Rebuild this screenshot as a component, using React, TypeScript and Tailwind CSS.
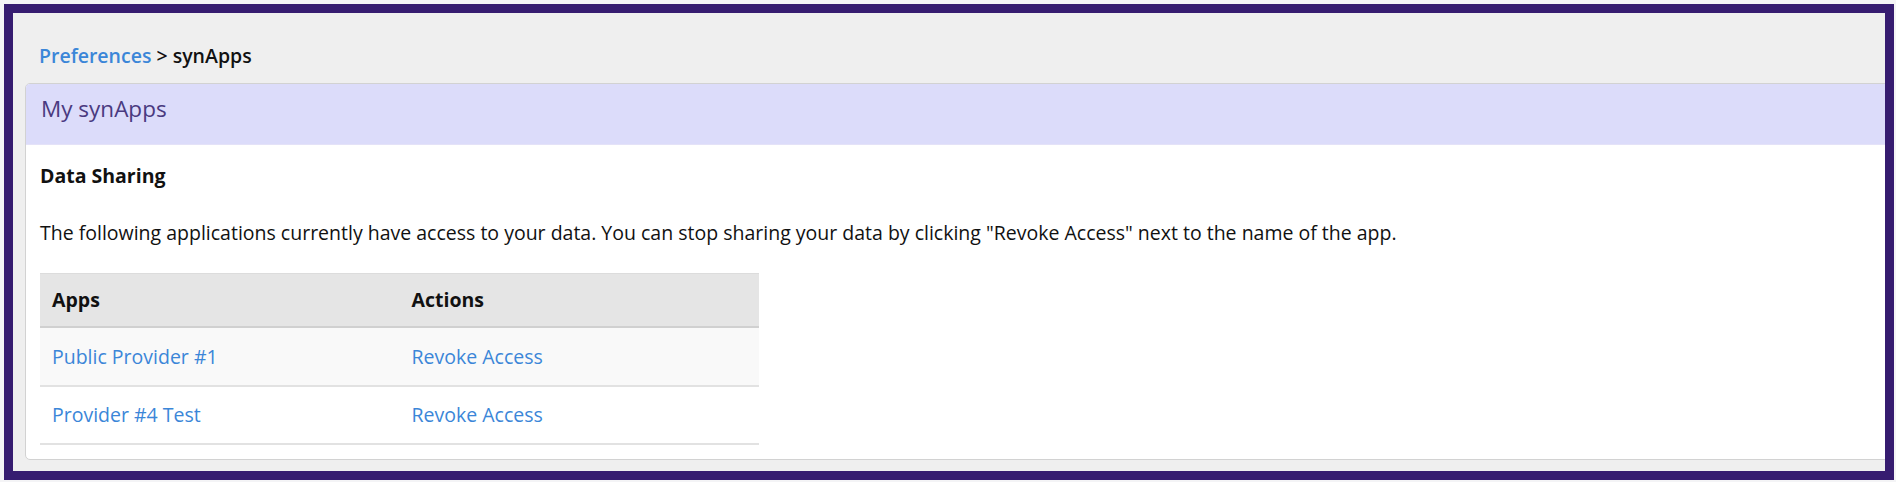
import React from "react";

export default function App() {
  const rows = ["Public Provider #1", "Provider #4 Test"];
  return (
    <div className="w-[1896px] h-[482px] bg-[#f4f4f6] pt-[4px] pl-[4px]" style={{ fontFamily: '"Open Sans", sans-serif' }}>
      <div className="w-[1890px] h-[476px] border-[9px] border-[#361c70] bg-[#efefef] overflow-hidden">
        <div className="pl-[12px] pt-[29px]">
          <div className="pl-[14px] h-[27px] leading-[27px] text-[19.5px] font-semibold text-[#111]">
            <span className="text-[#3b86d8]">Preferences</span> &gt; synApps
          </div>
          <div className="mt-[14px] mr-[-20px] border border-[#d2d2d2] rounded-[5px] bg-white overflow-hidden">
            <div className="h-[61px] bg-[#dcdcfa] pl-[15px] pt-[10px] border-b border-[#e4e2f8]">
              <div className="text-[22.5px] leading-[30px] text-[#4a3a80]">My synApps</div>
            </div>
            <div className="pl-[14px] pt-[17px] pb-[14px] text-[19.5px] text-[#111]">
              <div className="h-[27px] leading-[27px] font-bold">Data Sharing</div>
              <p className="mt-[30px] h-[27px] leading-[27px]">
                The following applications currently have access to your data. You can stop sharing your data by clicking "Revoke Access" next to the name of the app.
              </p>
              <div className="mt-[27px] w-[719px] border-t border-[#dcdcdc]">
                <div className="grid grid-cols-2 h-[54px] bg-[#e5e5e5] border-b-2 border-[#d0d0d0] items-center font-bold">
                  <div className="pl-[12px]">Apps</div>
                  <div className="pl-[12px]">Actions</div>
                </div>
                {rows.map((r, i) => (
                  <div
                    key={r}
                    className={
                      i === 0
                        ? "grid grid-cols-2 h-[59px] bg-[#f9f9f9] border-b-2 border-[#e2e2e2] items-center text-[#3b86d8]"
                        : "grid grid-cols-2 h-[58px] bg-white border-b-2 border-[#e2e2e2] items-center text-[#3b86d8]"
                    }
                  >
                    <div className="pl-[12px]">{r}</div>
                    <div className="pl-[12px]">Revoke Access</div>
                  </div>
                ))}
              </div>
            </div>
          </div>
        </div>
      </div>
    </div>
  );
}
